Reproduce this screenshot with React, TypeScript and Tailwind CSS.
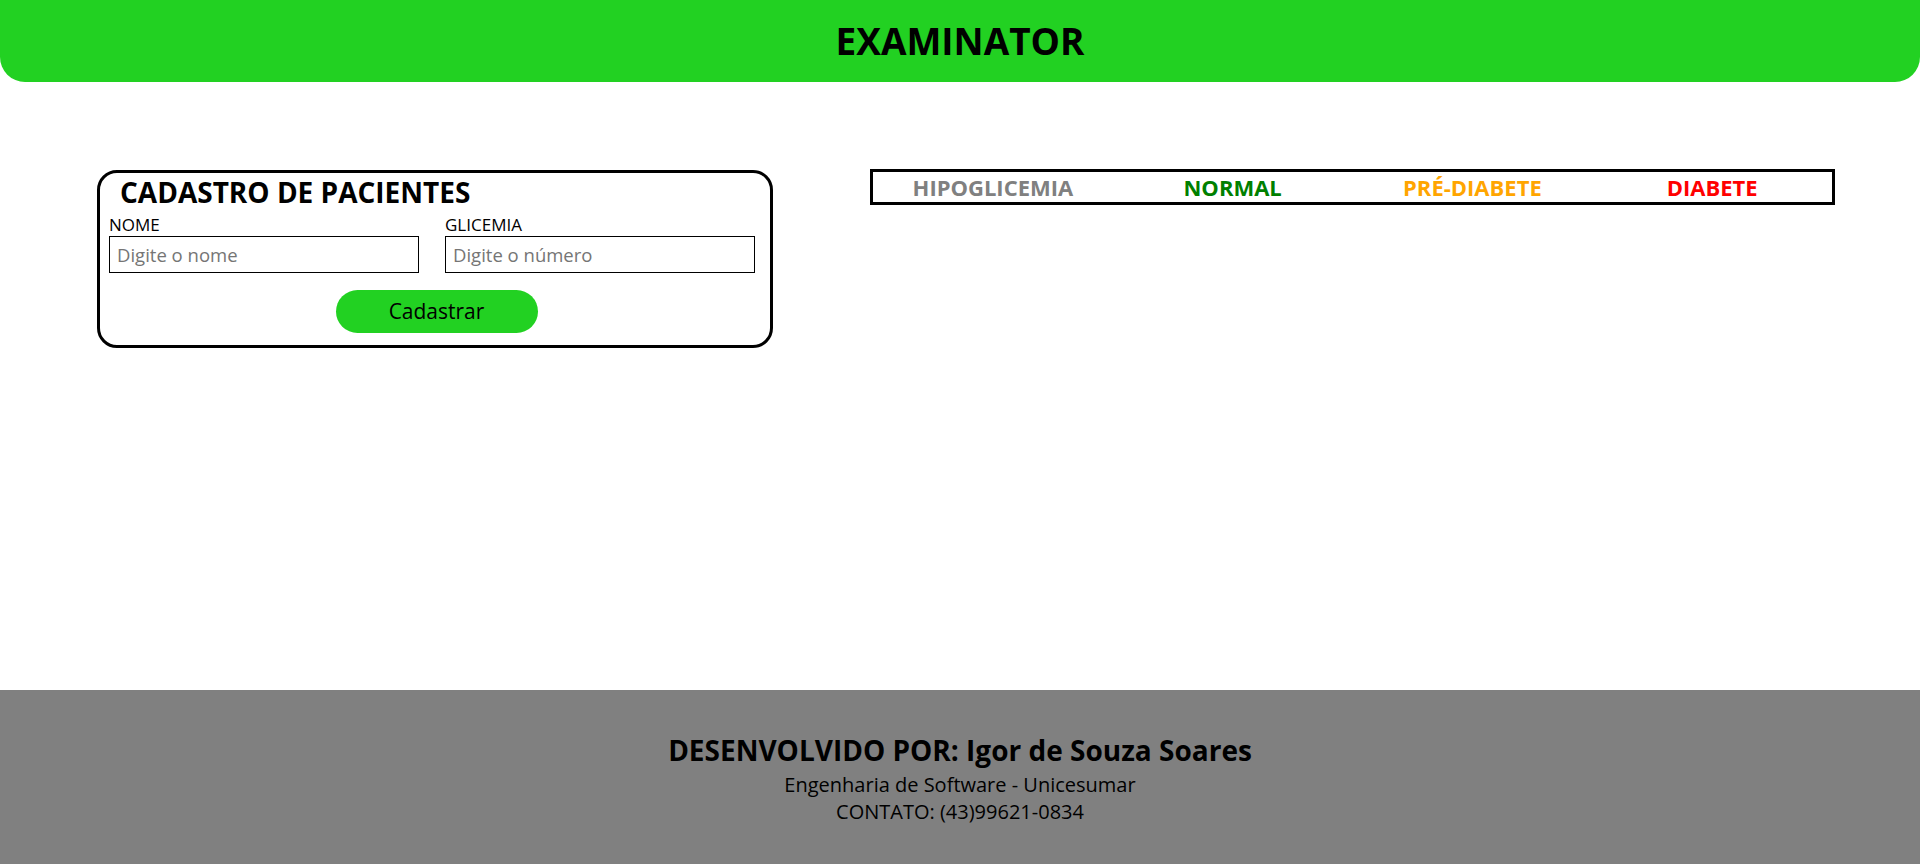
import React from "react";

export default function App() {
  return (
    <div
      className="flex h-screen w-full flex-col bg-white text-black"
      style={{ fontFamily: '"Open Sans", "Noto Sans", sans-serif' }}
    >
      <header className="flex h-[82px] shrink-0 items-center justify-center rounded-b-[25px] bg-[#22d122]">
        <h1 className="text-[37px] font-bold leading-[44px]">EXAMINATOR</h1>
      </header>

      <main className="flex flex-1 items-start pl-[97px] pt-[88px]">
        <section className="flex h-[178px] w-[676px] shrink-0 flex-col rounded-[20px] border-[3px] border-black pl-[9px] pt-[2px]">
          <h2 className="ml-[11px] text-[28px] font-bold leading-[34px]">CADASTRO DE PACIENTES</h2>
          <div className="mt-[6px] flex gap-[26px]">
            <label className="flex w-[310px] flex-col">
              <span className="text-[17px] leading-[20px]">NOME</span>
              <input
                type="text"
                placeholder="Digite o nome"
                className="mt-[1px] h-[37px] w-[310px] border border-black px-[7px] text-[18.5px] placeholder:text-[#757575] outline-none"
              />
            </label>
            <label className="flex w-[310px] flex-col">
              <span className="text-[17px] leading-[20px]">GLICEMIA</span>
              <input
                type="text"
                placeholder="Digite o número"
                className="mt-[1px] h-[37px] w-[310px] border border-black px-[7px] text-[18.5px] placeholder:text-[#757575] outline-none"
              />
            </label>
          </div>
          <div className="mt-[17px] flex justify-center pr-[6px]">
            <button className="h-[43px] w-[202px] rounded-full bg-[#22d122] text-[21px] leading-none text-black">
              Cadastrar
            </button>
          </div>
        </section>

        <section className="ml-[97px] -mt-[1px] grid h-[36px] w-[965px] shrink-0 grid-cols-4 items-center border-[3px] border-black text-[22px] font-bold leading-[30px]">
          <span className="text-center text-[#808080]">HIPOGLICEMIA</span>
          <span className="text-center text-[#008000]">NORMAL</span>
          <span className="text-center text-[#ffa500]">PRÉ-DIABETE</span>
          <span className="text-center text-[#ff0000]">DIABETE</span>
        </section>
      </main>

      <footer className="flex h-[174px] shrink-0 flex-col items-center bg-[#808080] pt-[43px] text-black">
        <p className="mb-[4px] text-[28px] font-bold leading-[34px]">DESENVOLVIDO POR: Igor de Souza Soares</p>
        <p className="text-[20px] leading-[27px]">Engenharia de Software - Unicesumar</p>
        <p className="text-[20px] leading-[27px]">CONTATO: (43)99621-0834</p>
      </footer>
    </div>
  );
}
